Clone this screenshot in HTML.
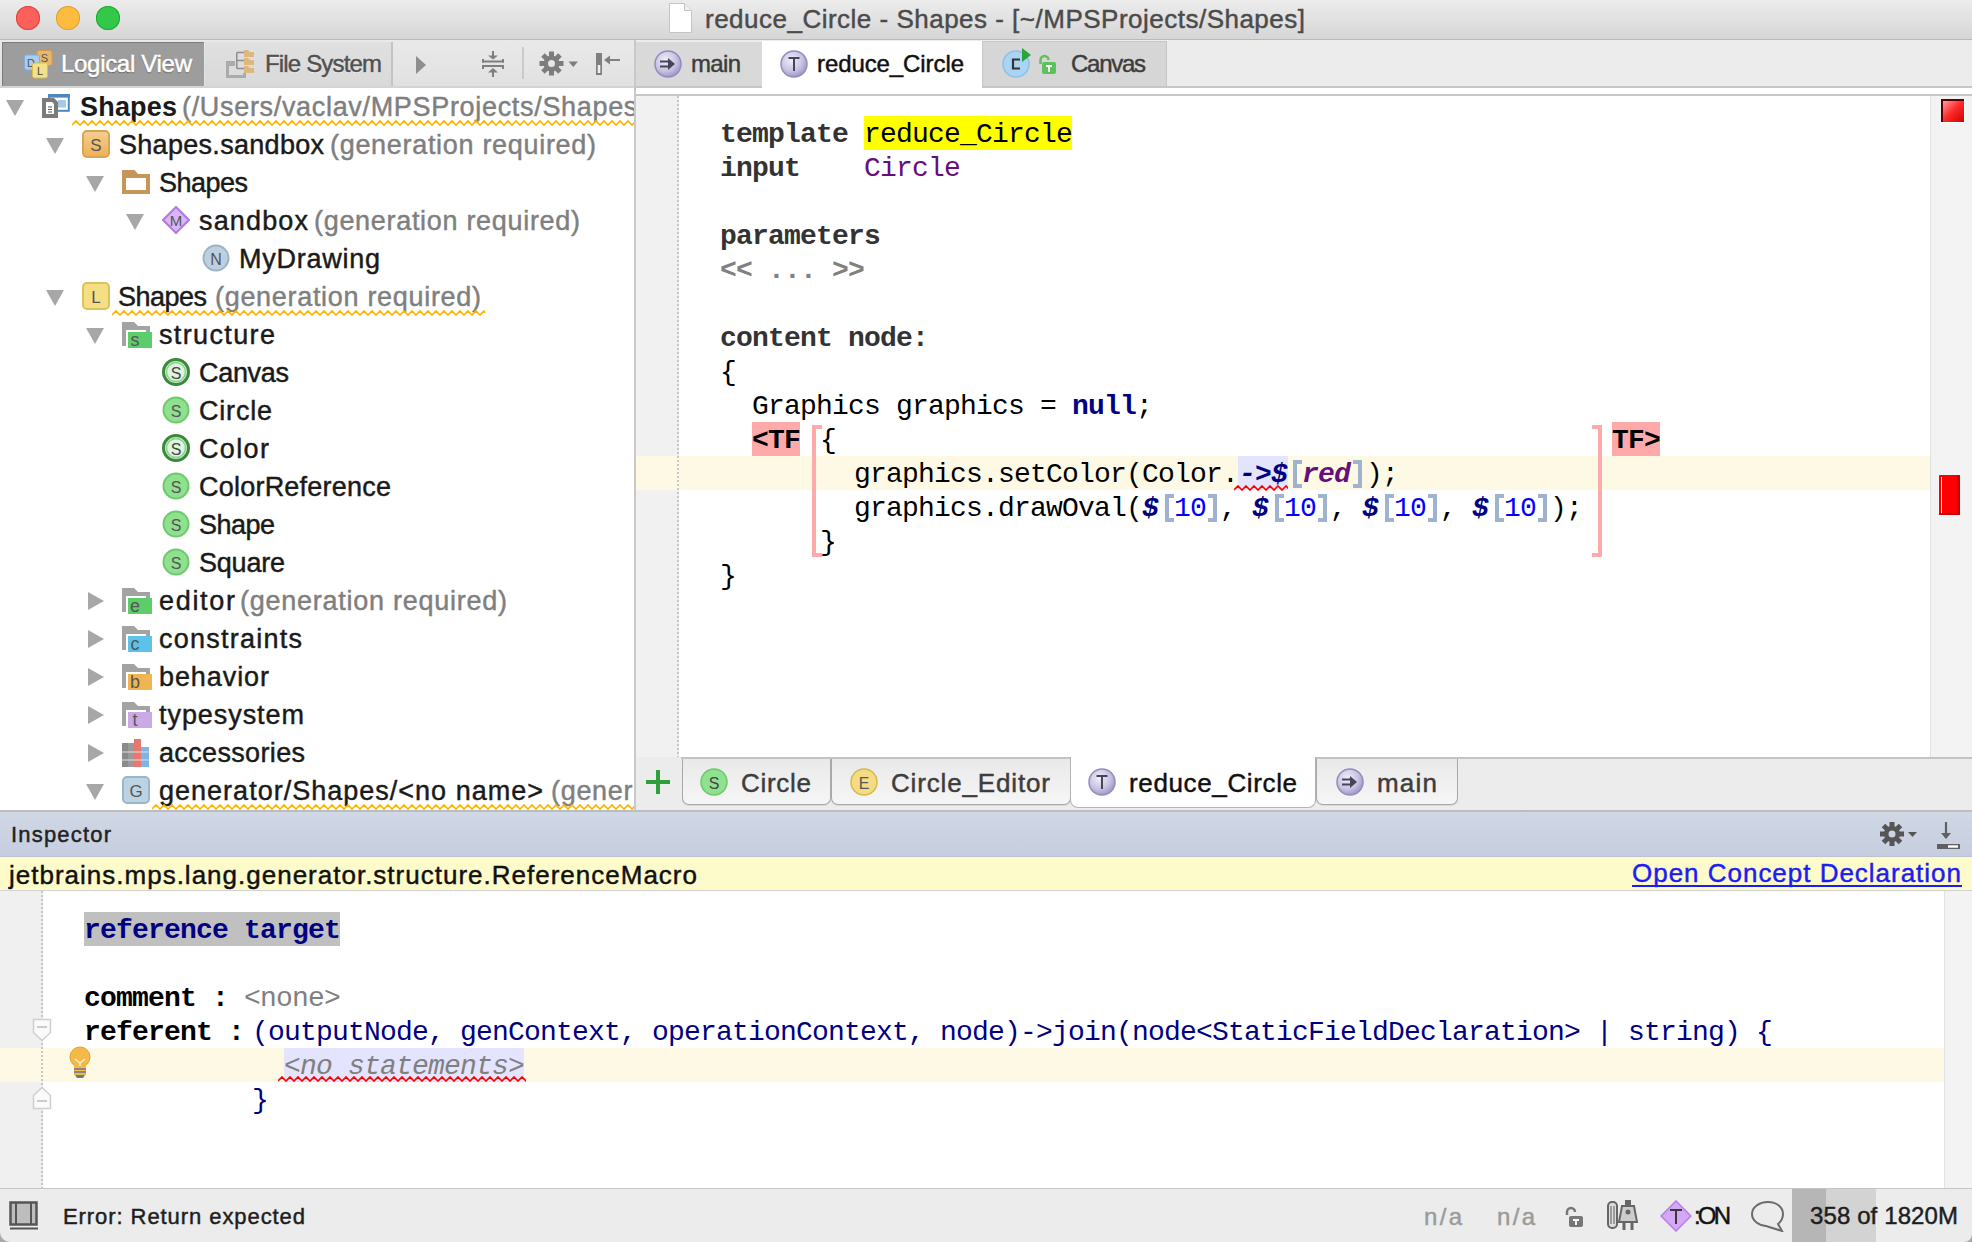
<!DOCTYPE html>
<html><head><meta charset="utf-8"><title>MPS</title>
<style>
html,body{margin:0;padding:0;}
body{width:1972px;height:1242px;overflow:hidden;position:relative;background:#ececec;font-family:"Liberation Sans",sans-serif;}
.t{position:absolute;white-space:pre;line-height:60px;}
svg{display:block;}
</style></head><body>
<div style="position:absolute;left:0px;top:0px;width:1972px;height:39px;background:linear-gradient(#ececec,#d6d6d6);"></div>
<div style="position:absolute;left:0px;top:39px;width:1972px;height:1px;background:#b9b9b9;"></div>
<div style="position:absolute;left:16px;top:6px;width:24px;height:24px;border-radius:50%;background:#fc605b;box-shadow:inset 0 0 0 1px #e0443e;"></div>
<div style="position:absolute;left:56px;top:6px;width:24px;height:24px;border-radius:50%;background:#fdbc40;box-shadow:inset 0 0 0 1px #dea236;"></div>
<div style="position:absolute;left:96px;top:6px;width:24px;height:24px;border-radius:50%;background:#34c84a;box-shadow:inset 0 0 0 1px #1aab29;"></div>
<svg style="position:absolute;left:668px;top:2px;" width="26" height="32" viewBox="0 0 26 32"><path d="M1.5 1.5h15l7 7v22h-22z" fill="#fff" stroke="#c4c4c4"/><path d="M16.5 1.5v7h7" fill="#eee" stroke="#c4c4c4"/></svg>
<div class="t" style="left:705px;top:-11px;font-family:'Liberation Sans',sans-serif;font-size:26px;color:#4b4b4b;letter-spacing:0.493px;-webkit-text-stroke:0.45px #4b4b4b;">reduce_Circle - Shapes - [~/MPSProjects/Shapes]</div>
<div style="position:absolute;left:0px;top:40px;width:634px;height:47px;background:linear-gradient(#e9e9e9,#e1e1e1);"></div>
<div style="position:absolute;left:2px;top:42px;width:202px;height:44px;background:#9d9d9d;box-shadow:inset 1px 1px 0 #7b7b7b;"></div>
<div style="position:absolute;left:205px;top:42px;width:186px;height:44px;background:linear-gradient(#e0e0e0,#d9d9d9);"></div>
<div style="position:absolute;left:391px;top:42px;width:2px;height:44px;background:#c3c3c3;"></div>
<div style="position:absolute;left:0px;top:86px;width:634px;height:2px;background:#d4d4d4;"></div>
<svg style="position:absolute;left:24px;top:50px;" width="30" height="30" viewBox="0 0 30 30"><rect x="13" y="0.5" width="15" height="15" rx="2" fill="#e8b86a" stroke="#d39c4c"/><text x="20.5" y="12" font-size="11" font-family="Liberation Sans" text-anchor="middle" fill="#555">S</text><rect x="0.5" y="5" width="15" height="15" rx="2" fill="#a8cdf0" stroke="#7fb0e0"/><text x="7" y="17" font-size="11" font-family="Liberation Sans" text-anchor="middle" fill="#555">D</text><rect x="8.5" y="13" width="15" height="15" rx="2" fill="#f3e08a" stroke="#d9bf52"/><text x="16" y="25" font-size="11" font-family="Liberation Sans" text-anchor="middle" fill="#444">L</text></svg>
<div class="t" style="left:61px;top:34px;font-family:'Liberation Sans',sans-serif;font-size:24px;color:#fff;letter-spacing:-0.301px;text-shadow:0 1px 1px #444,0 0 1px #666;-webkit-text-stroke:0.6px #fff;">Logical View</div>
<svg style="position:absolute;left:224px;top:48px;" width="32" height="32" viewBox="0 0 32 32"><path d="M2 13H11V18H5V27H19V25H22V30H2Z" fill="#ababab"/><path d="M12.75 4.5V20.5M12.75 4.5H20M12.75 12.5H20M12.75 20.5H20" stroke="#8e8e8e" stroke-width="1.5" fill="none"/><path d="M20 2h4l2 2h4v5h-10zM20 10h4l2 2h4v5h-10zM20 18h4l2 2h4v5h-10z" fill="#ddb77e"/></svg>
<div class="t" style="left:265px;top:34px;font-family:'Liberation Sans',sans-serif;font-size:24px;color:#505050;letter-spacing:-0.836px;text-shadow:0 1px 0 #f4f4f4;-webkit-text-stroke:0.45px #505050;">File System</div>
<svg style="position:absolute;left:414px;top:55px;" width="14" height="20" viewBox="0 0 14 20"><path d="M2 1l10 9-10 9z" fill="#8e8e8e"/></svg>
<svg style="position:absolute;left:480px;top:48px;" width="26" height="32" viewBox="0 0 26 32"><g fill="#7f7f7f"><rect x="2" y="12.5" width="22" height="2"/><rect x="2" y="17" width="22" height="2"/><rect x="2" y="11" width="2" height="3.5"/><rect x="22" y="11" width="2" height="3.5"/><rect x="2" y="17" width="2" height="4"/><rect x="22" y="17" width="2" height="4"/><rect x="12" y="3" width="2" height="6"/><path d="M8 7.5H18L13 11.5Z"/><path d="M8 24.5H18L13 20Z"/><rect x="12" y="24" width="2" height="5"/></g></svg>
<div style="position:absolute;left:522px;top:47px;width:2px;height:32px;background:#cacaca;"></div>
<svg style="position:absolute;left:539px;top:51px;" width="42" height="26" viewBox="0 0 42 26"><g transform="translate(12.5,12.5)" fill="#7d7d7d"><circle r="8"/><g id="tth"><rect x="-2.5" y="-12" width="5" height="24"/></g><rect x="-2.5" y="-12" width="5" height="24" transform="rotate(45)"/><rect x="-2.5" y="-12" width="5" height="24" transform="rotate(90)"/><rect x="-2.5" y="-12" width="5" height="24" transform="rotate(135)"/></g><circle cx="12.5" cy="12.5" r="3.5" fill="#e6e6e6"/><path d="M29.5 10.5h9.5l-4.75 5.5z" fill="#7d7d7d"/></svg>
<svg style="position:absolute;left:594px;top:52px;" width="28" height="24" viewBox="0 0 28 24"><g fill="#7f7f7f"><rect x="2" y="1" width="6" height="22"/><path d="M10 8L16 3.5V12.5Z"/><rect x="15" y="7" width="11" height="2"/></g><rect x="3.7" y="13" width="2.6" height="8" fill="#f0f0f0"/></svg>
<div style="position:absolute;left:634px;top:40px;width:2px;height:770px;background:#c9c9c9;"></div>
<div style="position:absolute;left:636px;top:40px;width:1336px;height:47px;background:#ececec;"></div>
<div style="position:absolute;left:636px;top:42px;width:126px;height:45px;background:#d9d9d9;"></div>
<div style="position:absolute;left:982px;top:41px;width:185px;height:46px;background:#d6d6d6;box-shadow:inset 0 0 0 1px #c6c6c6;"></div>
<div style="position:absolute;left:636px;top:86px;width:1336px;height:2px;background:#c6c6c6;"></div>
<div style="position:absolute;left:636px;top:88px;width:1336px;height:6px;background:#fff;"></div>
<div style="position:absolute;left:762px;top:41px;width:220px;height:53px;background:#fff;"></div>
<div style="position:absolute;left:636px;top:94px;width:1336px;height:2px;background:#c6c6c6;"></div>
<div style="position:absolute;left:0px;top:88px;width:634px;height:722px;background:#fff;"></div>
<div style="position:absolute;left:636px;top:96px;width:42px;height:661px;background:#f1f1f1;"></div>
<div style="position:absolute;left:679px;top:96px;width:1251px;height:661px;background:#fff;"></div>
<div style="position:absolute;left:1930px;top:96px;width:1px;height:661px;background:#e2e2e2;"></div>
<div style="position:absolute;left:1931px;top:96px;width:41px;height:661px;background:#f3f3f3;"></div>
<div style="position:absolute;left:636px;top:456px;width:1294px;height:34px;background:#fef9e5;"></div>
<div style="position:absolute;left:677px;top:96px;width:2px;height:661px;background:repeating-linear-gradient(#c6c6c6 0 2px,transparent 2px 4px);"></div>
<svg style="position:absolute;left:1941px;top:99px;" width="24" height="24" viewBox="0 0 24 24"><defs><linearGradient id="rg" x1="0" y1="0" x2="1" y2="1"><stop offset="0" stop-color="#ffaaaa"/><stop offset="0.5" stop-color="#ff2a2a"/><stop offset="1" stop-color="#cc0000"/></linearGradient></defs><rect x="0" y="0" width="24" height="24" fill="#fff"/><rect x="1" y="1" width="22" height="22" fill="url(#rg)"/><path d="M1 23V1h22" fill="none" stroke="#5a0000" stroke-width="2"/></svg>
<div style="position:absolute;left:1939px;top:475px;width:21px;height:40px;background:#ff0000;box-shadow:inset -3px -2px 0 #c80000;border-radius:1px;"></div>
<div style="position:absolute;left:1941px;top:477px;width:1px;height:36px;background:#fff;"></div>
<div style="position:absolute;left:636px;top:757px;width:1336px;height:53px;background:#ececec;"></div>
<div style="position:absolute;left:0px;top:810px;width:1972px;height:2px;background:#bdbdbd;"></div>
<div style="position:absolute;left:0px;top:812px;width:1972px;height:45px;background:linear-gradient(#d0d8e6,#c5cddf);"></div>
<div style="position:absolute;left:0px;top:856px;width:1972px;height:1px;background:#bcc3d3;"></div>
<div style="position:absolute;left:0px;top:857px;width:1972px;height:33px;background:#fefbcb;"></div>
<div style="position:absolute;left:0px;top:890px;width:1972px;height:1px;background:#d3d3d3;"></div>
<div style="position:absolute;left:0px;top:891px;width:42px;height:297px;background:#f0f0f0;"></div>
<div style="position:absolute;left:43px;top:891px;width:1901px;height:297px;background:#fff;"></div>
<div style="position:absolute;left:1944px;top:891px;width:1px;height:297px;background:#e2e2e2;"></div>
<div style="position:absolute;left:1945px;top:891px;width:27px;height:297px;background:#f3f3f3;"></div>
<div style="position:absolute;left:0px;top:1048px;width:1944px;height:34px;background:#fef9e5;"></div>
<div style="position:absolute;left:41px;top:891px;width:2px;height:297px;background:repeating-linear-gradient(#c6c6c6 0 2px,transparent 2px 4px);"></div>
<div style="position:absolute;left:0px;top:1188px;width:1972px;height:1px;background:#c4c4c4;"></div>
<div style="position:absolute;left:0px;top:1189px;width:1972px;height:53px;background:#ececec;"></div>
<div style="position:absolute;left:1792px;top:1189px;width:34px;height:53px;background:#b6b6b6;"></div>
<div style="position:absolute;left:1826px;top:1189px;width:50px;height:53px;background:#d3d3d3;"></div>
<div style="position:absolute;left:0;top:0;width:634px;height:810px;overflow:hidden">
<svg style="position:absolute;left:6px;top:100px;" width="18" height="16" viewBox="0 0 18 16"><path d="M0 0h18l-9 16z" fill="#a7a7a7"/></svg>
<svg style="position:absolute;left:42px;top:93px;" width="30" height="26" viewBox="0 0 30 26"><rect x="7.2" y="2.1" width="19.6" height="15.7" fill="#fff" stroke="#4d87bf" stroke-width="2"/><rect x="6.2" y="1.1" width="21.6" height="3.5" fill="#4d87bf"/><rect x="16" y="7" width="8" height="7.6" fill="#a9c8e4"/><path d="M0 5H12L16 9V25H0Z" fill="#7a7a7a"/><path d="M4 9H10L12 11V21H4Z" fill="#fff"/><path d="M6 14H10M6 16.5H10M6 19H10" stroke="#555" stroke-width="1"/></svg>
<div class="t" style="left:80px;top:76.5px;font-family:'Liberation Sans',sans-serif;font-size:27px;color:#1a1a1a;font-weight:700;letter-spacing:0.191px;">Shapes</div>
<div class="t" style="left:182px;top:76.5px;font-family:'Liberation Sans',sans-serif;font-size:27px;color:#7f7f7f;letter-spacing:0.678px;-webkit-text-stroke:0.45px #7f7f7f;">(/Users/vaclav/MPSProjects/Shapes)</div>
<svg style="position:absolute;left:72px;top:120px;" width="562" height="6" viewBox="0 0 562 6"><polyline points="0,5 4,1 8,5 12,1 16,5 20,1 24,5 28,1 32,5 36,1 40,5 44,1 48,5 52,1 56,5 60,1 64,5 68,1 72,5 76,1 80,5 84,1 88,5 92,1 96,5 100,1 104,5 108,1 112,5 116,1 120,5 124,1 128,5 132,1 136,5 140,1 144,5 148,1 152,5 156,1 160,5 164,1 168,5 172,1 176,5 180,1 184,5 188,1 192,5 196,1 200,5 204,1 208,5 212,1 216,5 220,1 224,5 228,1 232,5 236,1 240,5 244,1 248,5 252,1 256,5 260,1 264,5 268,1 272,5 276,1 280,5 284,1 288,5 292,1 296,5 300,1 304,5 308,1 312,5 316,1 320,5 324,1 328,5 332,1 336,5 340,1 344,5 348,1 352,5 356,1 360,5 364,1 368,5 372,1 376,5 380,1 384,5 388,1 392,5 396,1 400,5 404,1 408,5 412,1 416,5 420,1 424,5 428,1 432,5 436,1 440,5 444,1 448,5 452,1 456,5 460,1 464,5 468,1 472,5 476,1 480,5 484,1 488,5 492,1 496,5 500,1 504,5 508,1 512,5 516,1 520,5 524,1 528,5 532,1 536,5 540,1 544,5 548,1 552,5 556,1 560,5 564,1 568,5" fill="none" stroke="#fdb300" stroke-width="1.7"/></svg>
<svg style="position:absolute;left:46px;top:138px;" width="18" height="16" viewBox="0 0 18 16"><path d="M0 0h18l-9 16z" fill="#a7a7a7"/></svg>
<svg style="position:absolute;left:82px;top:130px;" width="28" height="28" viewBox="0 0 28 28"><defs><linearGradient id="og" x1="0" y1="0" x2="0" y2="1"><stop offset="0" stop-color="#f2cf94"/><stop offset="1" stop-color="#f0b053"/></linearGradient></defs><rect x="1" y="1" width="26" height="26" rx="4" fill="url(#og)" stroke="#dca452" stroke-width="2"/><text x="14" y="21" font-size="17" font-family="Liberation Sans" text-anchor="middle" fill="#555">S</text></svg>
<div class="t" style="left:119px;top:114.5px;font-family:'Liberation Sans',sans-serif;font-size:27px;color:#1a1a1a;letter-spacing:0.296px;-webkit-text-stroke:0.45px #1a1a1a;">Shapes.sandbox</div>
<div class="t" style="left:330px;top:114.5px;font-family:'Liberation Sans',sans-serif;font-size:27px;color:#7f7f7f;letter-spacing:0.692px;-webkit-text-stroke:0.45px #7f7f7f;">(generation required)</div>
<svg style="position:absolute;left:86px;top:176px;" width="18" height="16" viewBox="0 0 18 16"><path d="M0 0h18l-9 16z" fill="#a7a7a7"/></svg>
<svg style="position:absolute;left:122px;top:170px;" width="30" height="26" viewBox="0 0 30 26"><path d="M0 0h12.5l3.5 4h12v20h-28z" fill="#c4965a"/><rect x="4" y="8" width="20" height="12" fill="#fff"/></svg>
<div class="t" style="left:159px;top:152.5px;font-family:'Liberation Sans',sans-serif;font-size:27px;color:#1a1a1a;letter-spacing:-0.516px;-webkit-text-stroke:0.45px #1a1a1a;">Shapes</div>
<svg style="position:absolute;left:126px;top:214px;" width="18" height="16" viewBox="0 0 18 16"><path d="M0 0h18l-9 16z" fill="#a7a7a7"/></svg>
<svg style="position:absolute;left:162px;top:206px;" width="28" height="28" viewBox="0 0 28 28"><path d="M14 1l13 13-13 13-13-13z" fill="#d9b6f7" stroke="#b07ae0" stroke-width="2"/><text x="14" y="20" font-size="15" font-family="Liberation Sans" text-anchor="middle" fill="#555">M</text></svg>
<div class="t" style="left:199px;top:190.5px;font-family:'Liberation Sans',sans-serif;font-size:27px;color:#1a1a1a;letter-spacing:1.151px;-webkit-text-stroke:0.45px #1a1a1a;">sandbox</div>
<div class="t" style="left:314px;top:190.5px;font-family:'Liberation Sans',sans-serif;font-size:27px;color:#7f7f7f;letter-spacing:0.692px;-webkit-text-stroke:0.45px #7f7f7f;">(generation required)</div>
<svg style="position:absolute;left:202px;top:244px;" width="28" height="28" viewBox="0 0 28 28"><circle cx="14" cy="14" r="12.5" fill="#bdd0e0" stroke="#9bb3c8" stroke-width="2"/><text x="14" y="20.5" font-size="16" font-family="Liberation Sans" text-anchor="middle" fill="#555">N</text></svg>
<div class="t" style="left:239px;top:228.5px;font-family:'Liberation Sans',sans-serif;font-size:27px;color:#1a1a1a;letter-spacing:0.746px;-webkit-text-stroke:0.45px #1a1a1a;">MyDrawing</div>
<svg style="position:absolute;left:46px;top:290px;" width="18" height="16" viewBox="0 0 18 16"><path d="M0 0h18l-9 16z" fill="#a7a7a7"/></svg>
<svg style="position:absolute;left:82px;top:282px;" width="28" height="28" viewBox="0 0 28 28"><defs><linearGradient id="og" x1="0" y1="0" x2="0" y2="1"><stop offset="0" stop-color="#f2cf94"/><stop offset="1" stop-color="#f0b053"/></linearGradient></defs><rect x="1" y="1" width="26" height="26" rx="4" fill="#f5df85" stroke="#dcc25a" stroke-width="2"/><text x="14" y="21" font-size="17" font-family="Liberation Sans" text-anchor="middle" fill="#555">L</text></svg>
<div class="t" style="left:118px;top:266.5px;font-family:'Liberation Sans',sans-serif;font-size:27px;color:#1a1a1a;letter-spacing:-0.516px;-webkit-text-stroke:0.45px #1a1a1a;">Shapes</div>
<div class="t" style="left:215px;top:266.5px;font-family:'Liberation Sans',sans-serif;font-size:27px;color:#7f7f7f;letter-spacing:0.692px;-webkit-text-stroke:0.45px #7f7f7f;">(generation required)</div>
<svg style="position:absolute;left:112px;top:310px;" width="373" height="6" viewBox="0 0 373 6"><polyline points="0,5 4,1 8,5 12,1 16,5 20,1 24,5 28,1 32,5 36,1 40,5 44,1 48,5 52,1 56,5 60,1 64,5 68,1 72,5 76,1 80,5 84,1 88,5 92,1 96,5 100,1 104,5 108,1 112,5 116,1 120,5 124,1 128,5 132,1 136,5 140,1 144,5 148,1 152,5 156,1 160,5 164,1 168,5 172,1 176,5 180,1 184,5 188,1 192,5 196,1 200,5 204,1 208,5 212,1 216,5 220,1 224,5 228,1 232,5 236,1 240,5 244,1 248,5 252,1 256,5 260,1 264,5 268,1 272,5 276,1 280,5 284,1 288,5 292,1 296,5 300,1 304,5 308,1 312,5 316,1 320,5 324,1 328,5 332,1 336,5 340,1 344,5 348,1 352,5 356,1 360,5 364,1 368,5 372,1 376,5 380,1" fill="none" stroke="#fdb300" stroke-width="1.7"/></svg>
<svg style="position:absolute;left:86px;top:328px;" width="18" height="16" viewBox="0 0 18 16"><path d="M0 0h18l-9 16z" fill="#a7a7a7"/></svg>
<svg style="position:absolute;left:122px;top:322px;" width="32" height="28" viewBox="0 0 32 28"><path d="M0 0h12l4 4h12v6h-4v-2h-20v16h-4z" fill="#a3a3a3"/><rect x="4" y="8" width="20" height="16" fill="#fff"/><rect x="6" y="10" width="24" height="16" fill="#5dcc6a"/><text x="13" y="24" font-size="18" font-family="Liberation Sans" text-anchor="middle" fill="#555">s</text></svg>
<div class="t" style="left:159px;top:304.5px;font-family:'Liberation Sans',sans-serif;font-size:27px;color:#1a1a1a;letter-spacing:1.369px;-webkit-text-stroke:0.45px #1a1a1a;">structure</div>
<svg style="position:absolute;left:162px;top:358px;" width="28" height="28" viewBox="0 0 28 28"><circle cx="14" cy="14" r="12.5" fill="#cdeecd" stroke="#3a8a3e" stroke-width="3"/><circle cx="14" cy="14" r="9.5" fill="#dcf5dc" stroke="#8fd08f" stroke-width="1.5"/><text x="14" y="20.5" font-size="16" font-family="Liberation Sans" text-anchor="middle" fill="#444">S</text></svg>
<div class="t" style="left:199px;top:342.5px;font-family:'Liberation Sans',sans-serif;font-size:27px;color:#1a1a1a;letter-spacing:-0.309px;-webkit-text-stroke:0.45px #1a1a1a;">Canvas</div>
<svg style="position:absolute;left:162px;top:396px;" width="28" height="28" viewBox="0 0 28 28"><circle cx="14" cy="14" r="12.5" fill="#8fe08f" stroke="#6cc96c" stroke-width="2"/><text x="14" y="20.5" font-size="16" font-family="Liberation Sans" text-anchor="middle" fill="#555">S</text></svg>
<div class="t" style="left:199px;top:380.5px;font-family:'Liberation Sans',sans-serif;font-size:27px;color:#1a1a1a;letter-spacing:0.797px;-webkit-text-stroke:0.45px #1a1a1a;">Circle</div>
<svg style="position:absolute;left:162px;top:434px;" width="28" height="28" viewBox="0 0 28 28"><circle cx="14" cy="14" r="12.5" fill="#cdeecd" stroke="#3a8a3e" stroke-width="3"/><circle cx="14" cy="14" r="9.5" fill="#dcf5dc" stroke="#8fd08f" stroke-width="1.5"/><text x="14" y="20.5" font-size="16" font-family="Liberation Sans" text-anchor="middle" fill="#444">S</text></svg>
<div class="t" style="left:199px;top:418.5px;font-family:'Liberation Sans',sans-serif;font-size:27px;color:#1a1a1a;letter-spacing:1.367px;-webkit-text-stroke:0.45px #1a1a1a;">Color</div>
<svg style="position:absolute;left:162px;top:472px;" width="28" height="28" viewBox="0 0 28 28"><circle cx="14" cy="14" r="12.5" fill="#8fe08f" stroke="#6cc96c" stroke-width="2"/><text x="14" y="20.5" font-size="16" font-family="Liberation Sans" text-anchor="middle" fill="#555">S</text></svg>
<div class="t" style="left:199px;top:456.5px;font-family:'Liberation Sans',sans-serif;font-size:27px;color:#1a1a1a;letter-spacing:0.224px;-webkit-text-stroke:0.45px #1a1a1a;">ColorReference</div>
<svg style="position:absolute;left:162px;top:510px;" width="28" height="28" viewBox="0 0 28 28"><circle cx="14" cy="14" r="12.5" fill="#8fe08f" stroke="#6cc96c" stroke-width="2"/><text x="14" y="20.5" font-size="16" font-family="Liberation Sans" text-anchor="middle" fill="#555">S</text></svg>
<div class="t" style="left:199px;top:494.5px;font-family:'Liberation Sans',sans-serif;font-size:27px;color:#1a1a1a;letter-spacing:-0.520px;-webkit-text-stroke:0.45px #1a1a1a;">Shape</div>
<svg style="position:absolute;left:162px;top:548px;" width="28" height="28" viewBox="0 0 28 28"><circle cx="14" cy="14" r="12.5" fill="#8fe08f" stroke="#6cc96c" stroke-width="2"/><text x="14" y="20.5" font-size="16" font-family="Liberation Sans" text-anchor="middle" fill="#555">S</text></svg>
<div class="t" style="left:199px;top:532.5px;font-family:'Liberation Sans',sans-serif;font-size:27px;color:#1a1a1a;letter-spacing:-0.216px;-webkit-text-stroke:0.45px #1a1a1a;">Square</div>
<svg style="position:absolute;left:88px;top:592px;" width="16" height="18" viewBox="0 0 16 18"><path d="M0 0l16 9-16 9z" fill="#a7a7a7"/></svg>
<svg style="position:absolute;left:122px;top:588px;" width="32" height="28" viewBox="0 0 32 28"><path d="M0 0h12l4 4h12v6h-4v-2h-20v16h-4z" fill="#a3a3a3"/><rect x="4" y="8" width="20" height="16" fill="#fff"/><rect x="6" y="10" width="24" height="16" fill="#5dcc6a"/><text x="13" y="24" font-size="18" font-family="Liberation Sans" text-anchor="middle" fill="#555">e</text></svg>
<div class="t" style="left:159px;top:570.5px;font-family:'Liberation Sans',sans-serif;font-size:27px;color:#1a1a1a;letter-spacing:1.691px;-webkit-text-stroke:0.45px #1a1a1a;">editor</div>
<svg style="position:absolute;left:88px;top:630px;" width="16" height="18" viewBox="0 0 16 18"><path d="M0 0l16 9-16 9z" fill="#a7a7a7"/></svg>
<svg style="position:absolute;left:122px;top:626px;" width="32" height="28" viewBox="0 0 32 28"><path d="M0 0h12l4 4h12v6h-4v-2h-20v16h-4z" fill="#a3a3a3"/><rect x="4" y="8" width="20" height="16" fill="#fff"/><rect x="6" y="10" width="24" height="16" fill="#5cc2e8"/><text x="13" y="24" font-size="18" font-family="Liberation Sans" text-anchor="middle" fill="#555">c</text></svg>
<div class="t" style="left:159px;top:608.5px;font-family:'Liberation Sans',sans-serif;font-size:27px;color:#1a1a1a;letter-spacing:1.244px;-webkit-text-stroke:0.45px #1a1a1a;">constraints</div>
<svg style="position:absolute;left:88px;top:668px;" width="16" height="18" viewBox="0 0 16 18"><path d="M0 0l16 9-16 9z" fill="#a7a7a7"/></svg>
<svg style="position:absolute;left:122px;top:664px;" width="32" height="28" viewBox="0 0 32 28"><path d="M0 0h12l4 4h12v6h-4v-2h-20v16h-4z" fill="#a3a3a3"/><rect x="4" y="8" width="20" height="16" fill="#fff"/><rect x="6" y="10" width="24" height="16" fill="#f0b452"/><text x="13" y="24" font-size="18" font-family="Liberation Sans" text-anchor="middle" fill="#555">b</text></svg>
<div class="t" style="left:159px;top:646.5px;font-family:'Liberation Sans',sans-serif;font-size:27px;color:#1a1a1a;letter-spacing:0.917px;-webkit-text-stroke:0.45px #1a1a1a;">behavior</div>
<svg style="position:absolute;left:88px;top:706px;" width="16" height="18" viewBox="0 0 16 18"><path d="M0 0l16 9-16 9z" fill="#a7a7a7"/></svg>
<svg style="position:absolute;left:122px;top:702px;" width="32" height="28" viewBox="0 0 32 28"><path d="M0 0h12l4 4h12v6h-4v-2h-20v16h-4z" fill="#a3a3a3"/><rect x="4" y="8" width="20" height="16" fill="#fff"/><rect x="6" y="10" width="24" height="16" fill="#cba8e6"/><text x="13" y="24" font-size="18" font-family="Liberation Sans" text-anchor="middle" fill="#555">t</text></svg>
<div class="t" style="left:159px;top:684.5px;font-family:'Liberation Sans',sans-serif;font-size:27px;color:#1a1a1a;letter-spacing:0.939px;-webkit-text-stroke:0.45px #1a1a1a;">typesystem</div>
<div class="t" style="left:240px;top:570.5px;font-family:'Liberation Sans',sans-serif;font-size:27px;color:#7f7f7f;letter-spacing:0.742px;-webkit-text-stroke:0.45px #7f7f7f;">(generation required)</div>
<svg style="position:absolute;left:88px;top:744px;" width="16" height="18" viewBox="0 0 16 18"><path d="M0 0l16 9-16 9z" fill="#a7a7a7"/></svg>
<svg style="position:absolute;left:122px;top:739px;" width="30" height="28" viewBox="0 0 30 28"><rect x="0" y="4" width="6" height="24" fill="#8a8a8a"/><rect x="6" y="4" width="6" height="24" fill="#9a9a9a"/><rect x="12" y="0" width="7" height="28" fill="#e8776f"/><rect x="19" y="8" width="8" height="20" fill="#7fb2e6"/><path d="M0 13h27M0 21h27" stroke="#ddd" stroke-width="1.5" opacity="0.7"/></svg>
<div class="t" style="left:159px;top:722.5px;font-family:'Liberation Sans',sans-serif;font-size:27px;color:#1a1a1a;letter-spacing:0.344px;-webkit-text-stroke:0.45px #1a1a1a;">accessories</div>
<svg style="position:absolute;left:86px;top:784px;" width="18" height="16" viewBox="0 0 18 16"><path d="M0 0h18l-9 16z" fill="#a7a7a7"/></svg>
<svg style="position:absolute;left:122px;top:776px;" width="28" height="28" viewBox="0 0 28 28"><defs><linearGradient id="og" x1="0" y1="0" x2="0" y2="1"><stop offset="0" stop-color="#f2cf94"/><stop offset="1" stop-color="#f0b053"/></linearGradient></defs><rect x="1" y="1" width="26" height="26" rx="4" fill="#bcd3e3" stroke="#9ab6ca" stroke-width="2"/><text x="14" y="21" font-size="17" font-family="Liberation Sans" text-anchor="middle" fill="#555">G</text></svg>
<div class="t" style="left:159px;top:760.5px;font-family:'Liberation Sans',sans-serif;font-size:27px;color:#1a1a1a;letter-spacing:1.009px;-webkit-text-stroke:0.45px #1a1a1a;">generator/Shapes/&lt;no name&gt;</div>
<div class="t" style="left:551px;top:760.5px;font-family:'Liberation Sans',sans-serif;font-size:27px;color:#7f7f7f;letter-spacing:0.692px;-webkit-text-stroke:0.45px #7f7f7f;">(generation required)</div>
<svg style="position:absolute;left:152px;top:804px;" width="482" height="6" viewBox="0 0 482 6"><polyline points="0,5 4,1 8,5 12,1 16,5 20,1 24,5 28,1 32,5 36,1 40,5 44,1 48,5 52,1 56,5 60,1 64,5 68,1 72,5 76,1 80,5 84,1 88,5 92,1 96,5 100,1 104,5 108,1 112,5 116,1 120,5 124,1 128,5 132,1 136,5 140,1 144,5 148,1 152,5 156,1 160,5 164,1 168,5 172,1 176,5 180,1 184,5 188,1 192,5 196,1 200,5 204,1 208,5 212,1 216,5 220,1 224,5 228,1 232,5 236,1 240,5 244,1 248,5 252,1 256,5 260,1 264,5 268,1 272,5 276,1 280,5 284,1 288,5 292,1 296,5 300,1 304,5 308,1 312,5 316,1 320,5 324,1 328,5 332,1 336,5 340,1 344,5 348,1 352,5 356,1 360,5 364,1 368,5 372,1 376,5 380,1 384,5 388,1 392,5 396,1 400,5 404,1 408,5 412,1 416,5 420,1 424,5 428,1 432,5 436,1 440,5 444,1 448,5 452,1 456,5 460,1 464,5 468,1 472,5 476,1 480,5 484,1 488,5" fill="none" stroke="#fdb300" stroke-width="1.7"/></svg>
</div>
<div style="position:absolute;left:634px;top:88px;width:2px;height:722px;background:#c9c9c9;"></div>
<div style="position:absolute;left:864px;top:116px;width:208px;height:34px;background:#ffff00;"></div>
<div class="t" style="left:720px;top:105px;font-family:'Liberation Mono',monospace;font-size:28px;color:#333333;font-weight:700;letter-spacing:-0.803px;">template</div>
<div class="t" style="left:864px;top:105px;font-family:'Liberation Mono',monospace;font-size:28px;color:#000;letter-spacing:-0.803px;">reduce_Circle</div>
<div class="t" style="left:720px;top:139px;font-family:'Liberation Mono',monospace;font-size:28px;color:#333333;font-weight:700;letter-spacing:-0.803px;">input</div>
<div class="t" style="left:864px;top:139px;font-family:'Liberation Mono',monospace;font-size:28px;color:#660e7a;letter-spacing:-0.803px;">Circle</div>
<div class="t" style="left:720px;top:207px;font-family:'Liberation Mono',monospace;font-size:28px;color:#333333;font-weight:700;letter-spacing:-0.803px;">parameters</div>
<div class="t" style="left:720px;top:241px;font-family:'Liberation Mono',monospace;font-size:28px;color:#808080;font-weight:700;letter-spacing:-0.803px;">&lt;&lt; ... &gt;&gt;</div>
<div class="t" style="left:720px;top:309px;font-family:'Liberation Mono',monospace;font-size:28px;color:#333333;font-weight:700;letter-spacing:-0.803px;">content node:</div>
<div class="t" style="left:720px;top:343px;font-family:'Liberation Mono',monospace;font-size:28px;color:#000;letter-spacing:-0.803px;">{</div>
<div class="t" style="left:752px;top:377px;font-family:'Liberation Mono',monospace;font-size:28px;color:#000;letter-spacing:-0.803px;">Graphics graphics = </div>
<div class="t" style="left:1072px;top:377px;font-family:'Liberation Mono',monospace;font-size:28px;color:#000080;font-weight:700;letter-spacing:-0.803px;">null</div>
<div class="t" style="left:1136px;top:377px;font-family:'Liberation Mono',monospace;font-size:28px;color:#000;letter-spacing:-0.803px;">;</div>
<div style="position:absolute;left:752px;top:422px;width:48px;height:34px;background:#ffaaaa;"></div>
<div class="t" style="left:752px;top:411px;font-family:'Liberation Mono',monospace;font-size:28px;color:#000;font-weight:700;letter-spacing:-0.803px;">&lt;TF</div>
<div class="t" style="left:820px;top:411px;font-family:'Liberation Mono',monospace;font-size:28px;color:#000;letter-spacing:-0.803px;">{</div>
<div style="position:absolute;left:1612px;top:422px;width:48px;height:34px;background:#ffaaaa;"></div>
<div class="t" style="left:1612px;top:411px;font-family:'Liberation Mono',monospace;font-size:28px;color:#000;font-weight:700;letter-spacing:-0.803px;">TF&gt;</div>
<svg style="position:absolute;left:811px;top:425px;" width="12" height="132" viewBox="0 0 12 132"><path d="M11 2H3v128h8" fill="none" stroke="#ffaaaa" stroke-width="4"/></svg>
<svg style="position:absolute;left:1591px;top:425px;" width="12" height="132" viewBox="0 0 12 132"><path d="M1 2h8v128H1" fill="none" stroke="#ffaaaa" stroke-width="4"/></svg>
<div class="t" style="left:820px;top:513px;font-family:'Liberation Mono',monospace;font-size:28px;color:#000;letter-spacing:-0.803px;">}</div>
<div class="t" style="left:720px;top:547px;font-family:'Liberation Mono',monospace;font-size:28px;color:#000;letter-spacing:-0.803px;">}</div>
<div class="t" style="left:854px;top:445px;font-family:'Liberation Mono',monospace;font-size:28px;color:#000;letter-spacing:-0.803px;">graphics.setColor(Color.</div>
<div style="position:absolute;left:1238px;top:456px;width:50px;height:34px;background:#e4e4ff;"></div>
<div class="t" style="left:1239px;top:445px;font-family:'Liberation Mono',monospace;font-size:28px;color:#000080;font-weight:700;font-style:italic;letter-spacing:-0.803px;">-&gt;$</div>
<svg style="position:absolute;left:1234px;top:485px;" width="54" height="6" viewBox="0 0 54 6"><polyline points="0,5 4,1 8,5 12,1 16,5 20,1 24,5 28,1 32,5 36,1 40,5 44,1 48,5 52,1 56,5 60,1" fill="none" stroke="#ff0000" stroke-width="1.7"/></svg>
<svg style="position:absolute;left:1292px;top:460px;" width="11" height="28" viewBox="0 0 11 28"><path d="M10 2H3v24h7" fill="none" stroke="#9fb3cf" stroke-width="4"/></svg>
<div class="t" style="left:1302px;top:445px;font-family:'Liberation Mono',monospace;font-size:28px;color:#660e7a;font-weight:700;font-style:italic;letter-spacing:-0.803px;">red</div>
<svg style="position:absolute;left:1353px;top:460px;" width="11" height="28" viewBox="0 0 11 28"><path d="M0 2h7v24H0" fill="none" stroke="#9fb3cf" stroke-width="4"/></svg>
<div class="t" style="left:1366px;top:445px;font-family:'Liberation Mono',monospace;font-size:28px;color:#000;letter-spacing:-0.803px;">);</div>
<div class="t" style="left:854px;top:479px;font-family:'Liberation Mono',monospace;font-size:28px;color:#000;letter-spacing:-0.803px;">graphics.drawOval(</div>
<div class="t" style="left:1142px;top:479px;font-family:'Liberation Mono',monospace;font-size:28px;color:#000080;font-weight:700;font-style:italic;letter-spacing:-0.803px;">$</div>
<svg style="position:absolute;left:1164px;top:494px;" width="11" height="28" viewBox="0 0 11 28"><path d="M10 2H3v24h7" fill="none" stroke="#9fb3cf" stroke-width="4"/></svg>
<div class="t" style="left:1174px;top:479px;font-family:'Liberation Mono',monospace;font-size:28px;color:#0000ff;letter-spacing:-0.803px;">10</div>
<svg style="position:absolute;left:1208px;top:494px;" width="11" height="28" viewBox="0 0 11 28"><path d="M0 2h7v24H0" fill="none" stroke="#9fb3cf" stroke-width="4"/></svg>
<div class="t" style="left:1220px;top:479px;font-family:'Liberation Mono',monospace;font-size:28px;color:#000;letter-spacing:-0.803px;">,</div>
<div class="t" style="left:1252px;top:479px;font-family:'Liberation Mono',monospace;font-size:28px;color:#000080;font-weight:700;font-style:italic;letter-spacing:-0.803px;">$</div>
<svg style="position:absolute;left:1274px;top:494px;" width="11" height="28" viewBox="0 0 11 28"><path d="M10 2H3v24h7" fill="none" stroke="#9fb3cf" stroke-width="4"/></svg>
<div class="t" style="left:1284px;top:479px;font-family:'Liberation Mono',monospace;font-size:28px;color:#0000ff;letter-spacing:-0.803px;">10</div>
<svg style="position:absolute;left:1318px;top:494px;" width="11" height="28" viewBox="0 0 11 28"><path d="M0 2h7v24H0" fill="none" stroke="#9fb3cf" stroke-width="4"/></svg>
<div class="t" style="left:1330px;top:479px;font-family:'Liberation Mono',monospace;font-size:28px;color:#000;letter-spacing:-0.803px;">,</div>
<div class="t" style="left:1362px;top:479px;font-family:'Liberation Mono',monospace;font-size:28px;color:#000080;font-weight:700;font-style:italic;letter-spacing:-0.803px;">$</div>
<svg style="position:absolute;left:1384px;top:494px;" width="11" height="28" viewBox="0 0 11 28"><path d="M10 2H3v24h7" fill="none" stroke="#9fb3cf" stroke-width="4"/></svg>
<div class="t" style="left:1394px;top:479px;font-family:'Liberation Mono',monospace;font-size:28px;color:#0000ff;letter-spacing:-0.803px;">10</div>
<svg style="position:absolute;left:1428px;top:494px;" width="11" height="28" viewBox="0 0 11 28"><path d="M0 2h7v24H0" fill="none" stroke="#9fb3cf" stroke-width="4"/></svg>
<div class="t" style="left:1440px;top:479px;font-family:'Liberation Mono',monospace;font-size:28px;color:#000;letter-spacing:-0.803px;">,</div>
<div class="t" style="left:1472px;top:479px;font-family:'Liberation Mono',monospace;font-size:28px;color:#000080;font-weight:700;font-style:italic;letter-spacing:-0.803px;">$</div>
<svg style="position:absolute;left:1494px;top:494px;" width="11" height="28" viewBox="0 0 11 28"><path d="M10 2H3v24h7" fill="none" stroke="#9fb3cf" stroke-width="4"/></svg>
<div class="t" style="left:1504px;top:479px;font-family:'Liberation Mono',monospace;font-size:28px;color:#0000ff;letter-spacing:-0.803px;">10</div>
<svg style="position:absolute;left:1538px;top:494px;" width="11" height="28" viewBox="0 0 11 28"><path d="M0 2h7v24H0" fill="none" stroke="#9fb3cf" stroke-width="4"/></svg>
<div class="t" style="left:1550px;top:479px;font-family:'Liberation Mono',monospace;font-size:28px;color:#000;letter-spacing:-0.803px;">);</div>
<svg style="position:absolute;left:654px;top:50px;" width="28" height="28" viewBox="0 0 28 28"><defs><radialGradient id="pg65450" cx="0.4" cy="0.35" r="0.7"><stop offset="0" stop-color="#f2eef9"/><stop offset="0.6" stop-color="#c9c2e2"/><stop offset="1" stop-color="#9a92c2"/></radialGradient></defs><circle cx="14.0" cy="14.0" r="13.0" fill="url(#pg65450)" stroke="#948cba" stroke-width="1.5"/><path d="M6 11.5h9M6 16.5h9" stroke="#45455a" stroke-width="2.2"/><path d="M14 8l7 6-7 6z" fill="#45455a"/></svg>
<div class="t" style="left:691px;top:34px;font-family:'Liberation Sans',sans-serif;font-size:24px;color:#3d3d3d;letter-spacing:-0.677px;-webkit-text-stroke:0.45px #3d3d3d;">main</div>
<svg style="position:absolute;left:780px;top:50px;" width="28" height="28" viewBox="0 0 28 28"><defs><radialGradient id="pg78050" cx="0.4" cy="0.35" r="0.7"><stop offset="0" stop-color="#f2eef9"/><stop offset="0.6" stop-color="#c9c2e2"/><stop offset="1" stop-color="#9a92c2"/></radialGradient></defs><circle cx="14.0" cy="14.0" r="13.0" fill="url(#pg78050)" stroke="#948cba" stroke-width="1.5"/><path d="M8.5 8h11M14 8v13" stroke="#45455a" stroke-width="2"/></svg>
<div class="t" style="left:817px;top:34px;font-family:'Liberation Sans',sans-serif;font-size:24px;color:#111;letter-spacing:-0.090px;-webkit-text-stroke:0.45px #111;">reduce_Circle</div>
<svg style="position:absolute;left:1000px;top:46px;" width="58" height="34" viewBox="0 0 58 34"><circle cx="16" cy="18" r="13" fill="#a9d4f3" stroke="#8cc0e8" stroke-width="1.5"/><path d="M20 13.5h-7v9h7" fill="none" stroke="#333" stroke-width="2.2"/><path d="M22 2v14l9-7z" fill="#2aa33a"/><path d="M40.5 18v-4a4 4 0 0 1 8 0" fill="none" stroke="#5cc25c" stroke-width="2.5"/><rect x="42" y="16" width="14" height="12" rx="2" fill="#5cc25c"/><path d="M46 20h6M49 20v6" stroke="#fff" stroke-width="1.8"/></svg>
<div class="t" style="left:1071px;top:34px;font-family:'Liberation Sans',sans-serif;font-size:24px;color:#3d3d3d;letter-spacing:-1.275px;-webkit-text-stroke:0.45px #3d3d3d;">Canvas</div>
<div style="position:absolute;left:681px;top:757px;width:1291px;height:2px;background:#c3c3c3;"></div>
<svg style="position:absolute;left:645px;top:769px;" width="26" height="26" viewBox="0 0 26 26"><path d="M13 1v24M1 13h24" stroke="#2e9f3a" stroke-width="4"/></svg>
<div style="position:absolute;left:682px;top:759px;width:149px;height:46px;background:linear-gradient(#e9e9e9,#f6f6f6);border:1px solid #a9a9a9;border-top:none;border-radius:0 0 7px 7px;box-sizing:border-box;box-shadow:0 1px 0 #d8d8d8;"></div>
<div style="position:absolute;left:1316px;top:759px;width:142px;height:46px;background:linear-gradient(#e9e9e9,#f6f6f6);border:1px solid #a9a9a9;border-top:none;border-radius:0 0 7px 7px;box-sizing:border-box;box-shadow:0 1px 0 #d8d8d8;"></div>
<div style="position:absolute;left:831px;top:759px;width:240px;height:46px;background:linear-gradient(#e9e9e9,#f6f6f6);border:1px solid #a9a9a9;border-top:none;border-radius:0 0 7px 7px;box-sizing:border-box;box-shadow:0 1px 0 #d8d8d8;"></div>
<div style="position:absolute;left:1070px;top:757px;width:246px;height:51px;background:#fff;border:1px solid #b3b3b3;border-top:none;border-radius:0 0 8px 8px;box-sizing:border-box;"></div>
<svg style="position:absolute;left:700px;top:768px;" width="28" height="28" viewBox="0 0 28 28"><circle cx="14" cy="14" r="13" fill="#8fe08f" stroke="#6cc96c" stroke-width="1.5"/><text x="14" y="20.5" font-size="16" font-family="Liberation Sans" text-anchor="middle" fill="#444">S</text></svg>
<div class="t" style="left:741px;top:753px;font-family:'Liberation Sans',sans-serif;font-size:26px;color:#3d3d3d;letter-spacing:0.709px;-webkit-text-stroke:0.45px #3d3d3d;">Circle</div>
<svg style="position:absolute;left:850px;top:768px;" width="28" height="28" viewBox="0 0 28 28"><circle cx="14" cy="14" r="13" fill="#f4dc84" stroke="#d9b84a" stroke-width="1.5"/><text x="14" y="20.5" font-size="16" font-family="Liberation Sans" text-anchor="middle" fill="#555">E</text></svg>
<div class="t" style="left:891px;top:753px;font-family:'Liberation Sans',sans-serif;font-size:26px;color:#3d3d3d;letter-spacing:0.848px;-webkit-text-stroke:0.45px #3d3d3d;">Circle_Editor</div>
<svg style="position:absolute;left:1088px;top:768px;" width="28" height="28" viewBox="0 0 28 28"><defs><radialGradient id="pg1088768" cx="0.4" cy="0.35" r="0.7"><stop offset="0" stop-color="#f2eef9"/><stop offset="0.6" stop-color="#c9c2e2"/><stop offset="1" stop-color="#9a92c2"/></radialGradient></defs><circle cx="14.0" cy="14.0" r="13.0" fill="url(#pg1088768)" stroke="#948cba" stroke-width="1.5"/><path d="M8.5 8h11M14 8v13" stroke="#45455a" stroke-width="2"/></svg>
<div class="t" style="left:1129px;top:753px;font-family:'Liberation Sans',sans-serif;font-size:26px;color:#111;letter-spacing:0.633px;-webkit-text-stroke:0.45px #111;">reduce_Circle</div>
<svg style="position:absolute;left:1336px;top:768px;" width="28" height="28" viewBox="0 0 28 28"><defs><radialGradient id="pg1336768" cx="0.4" cy="0.35" r="0.7"><stop offset="0" stop-color="#f2eef9"/><stop offset="0.6" stop-color="#c9c2e2"/><stop offset="1" stop-color="#9a92c2"/></radialGradient></defs><circle cx="14.0" cy="14.0" r="13.0" fill="url(#pg1336768)" stroke="#948cba" stroke-width="1.5"/><path d="M6 11.5h9M6 16.5h9" stroke="#45455a" stroke-width="2.2"/><path d="M14 8l7 6-7 6z" fill="#45455a"/></svg>
<div class="t" style="left:1377px;top:753px;font-family:'Liberation Sans',sans-serif;font-size:26px;color:#3d3d3d;letter-spacing:1.214px;-webkit-text-stroke:0.45px #3d3d3d;">main</div>
<div class="t" style="left:11px;top:805px;font-family:'Liberation Sans',sans-serif;font-size:22px;color:#222;letter-spacing:1.188px;-webkit-text-stroke:0.45px #222;">Inspector</div>
<svg style="position:absolute;left:1878px;top:818px;" width="40" height="32" viewBox="0 0 40 32"><g transform="translate(14,16)" fill="#555"><circle r="8"/><rect x="-2.5" y="-12" width="5" height="24"/><rect x="-2.5" y="-12" width="5" height="24" transform="rotate(45)"/><rect x="-2.5" y="-12" width="5" height="24" transform="rotate(90)"/><rect x="-2.5" y="-12" width="5" height="24" transform="rotate(135)"/></g><circle cx="14" cy="16" r="3.5" fill="#cad2e3"/><path d="M30 14h9l-4.5 5z" fill="#555"/></svg>
<svg style="position:absolute;left:1934px;top:821px;" width="28" height="32" viewBox="0 0 28 32"><path d="M12 1v16" stroke="#606060" stroke-width="2.2"/><path d="M7 12l5 6 5-6z" fill="#606060"/><rect x="3" y="23" width="23" height="5" fill="#606060"/><rect x="14" y="24.3" width="10" height="2.4" fill="#fff"/></svg>
<div class="t" style="left:9px;top:845px;font-family:'Liberation Sans',sans-serif;font-size:26px;color:#111;letter-spacing:1.002px;-webkit-text-stroke:0.45px #111;">jetbrains.mps.lang.generator.structure.ReferenceMacro</div>
<div class="t" style="left:1632px;top:843px;font-family:'Liberation Sans',sans-serif;font-size:26px;color:#1c1cf5;letter-spacing:0.982px;-webkit-text-stroke:0.45px #1c1cf5;">Open Concept Declaration</div>
<div style="position:absolute;left:1632px;top:885px;width:330px;height:2px;background:#1c1cf5;"></div>
<div style="position:absolute;left:84px;top:912px;width:256px;height:34px;background:#c0c0c0;"></div>
<div class="t" style="left:84px;top:901px;font-family:'Liberation Mono',monospace;font-size:28px;color:#000080;font-weight:700;letter-spacing:-0.803px;">reference target</div>
<div class="t" style="left:84px;top:969px;font-family:'Liberation Mono',monospace;font-size:28px;color:#000;font-weight:700;letter-spacing:-0.803px;">comment :</div>
<div class="t" style="left:244px;top:969px;font-family:'Liberation Mono',monospace;font-size:28px;color:#808080;letter-spacing:-0.803px;">&lt;none&gt;</div>
<div class="t" style="left:84px;top:1003px;font-family:'Liberation Mono',monospace;font-size:28px;color:#000;font-weight:700;letter-spacing:-0.803px;">referent :</div>
<div class="t" style="left:252px;top:1003px;font-family:'Liberation Mono',monospace;font-size:28px;color:#000080;letter-spacing:-0.803px;">(outputNode, genContext, operationContext, node)-&gt;join(node&lt;StaticFieldDeclaration&gt; | string) {</div>
<div style="position:absolute;left:284px;top:1048px;width:240px;height:34px;background:#e4e4ff;"></div>
<div class="t" style="left:284px;top:1037px;font-family:'Liberation Mono',monospace;font-size:28px;color:#808080;font-style:italic;letter-spacing:-0.803px;">&lt;no statements&gt;</div>
<svg style="position:absolute;left:278px;top:1076px;" width="248" height="6" viewBox="0 0 248 6"><polyline points="0,5 4,1 8,5 12,1 16,5 20,1 24,5 28,1 32,5 36,1 40,5 44,1 48,5 52,1 56,5 60,1 64,5 68,1 72,5 76,1 80,5 84,1 88,5 92,1 96,5 100,1 104,5 108,1 112,5 116,1 120,5 124,1 128,5 132,1 136,5 140,1 144,5 148,1 152,5 156,1 160,5 164,1 168,5 172,1 176,5 180,1 184,5 188,1 192,5 196,1 200,5 204,1 208,5 212,1 216,5 220,1 224,5 228,1 232,5 236,1 240,5 244,1 248,5 252,1" fill="none" stroke="#ff0000" stroke-width="1.7"/></svg>
<div class="t" style="left:252px;top:1071px;font-family:'Liberation Mono',monospace;font-size:28px;color:#000080;letter-spacing:-0.803px;">}</div>
<svg style="position:absolute;left:68px;top:1046px;" width="24" height="34" viewBox="0 0 24 34"><circle cx="12" cy="11" r="10" fill="#f5b94a" stroke="#e0a030" stroke-width="1"/><path d="M7 13l5 4 5-4M12 17v4" stroke="#fff3c4" stroke-width="1.5" fill="none"/><rect x="6" y="20" width="12" height="9" fill="#f5b94a"/><path d="M6 23h12M6 26h12" stroke="#888" stroke-width="2"/><path d="M7 29h10l-2 3h-6z" fill="#777"/></svg>
<svg style="position:absolute;left:32px;top:1018px;" width="20" height="24" viewBox="0 0 20 24"><path d="M1.5 1.5h17v13l-8.5 8-8.5-8z" fill="#fafafa" stroke="#cfcfcf" stroke-width="1.5"/><path d="M5 9h10" stroke="#bdbdbd" stroke-width="1.5"/></svg>
<svg style="position:absolute;left:32px;top:1086px;" width="20" height="24" viewBox="0 0 20 24"><path d="M1.5 22.5h17v-13l-8.5-8-8.5 8z" fill="#fafafa" stroke="#cfcfcf" stroke-width="1.5"/><path d="M5 15h10" stroke="#bdbdbd" stroke-width="1.5"/></svg>
<svg style="position:absolute;left:9px;top:1201px;" width="30" height="29" viewBox="0 0 30 29"><rect x="1.5" y="1.5" width="26" height="22" fill="#bdbdbd" stroke="#555" stroke-width="2.5"/><path d="M7 2v22M22 2v22" stroke="#555" stroke-width="2"/><path d="M1 27.5h28" stroke="#555" stroke-width="2"/></svg>
<div class="t" style="left:63px;top:1187px;font-family:'Liberation Sans',sans-serif;font-size:22px;color:#1e1e1e;letter-spacing:0.926px;-webkit-text-stroke:0.45px #1e1e1e;">Error: Return expected</div>
<div class="t" style="left:1424px;top:1187px;font-family:'Liberation Sans',sans-serif;font-size:24px;color:#9a9a9a;letter-spacing:2.312px;-webkit-text-stroke:0.45px #9a9a9a;">n/a</div>
<div class="t" style="left:1497px;top:1187px;font-family:'Liberation Sans',sans-serif;font-size:24px;color:#9a9a9a;letter-spacing:2.312px;-webkit-text-stroke:0.45px #9a9a9a;">n/a</div>
<svg style="position:absolute;left:1563px;top:1206px;" width="22" height="22" viewBox="0 0 22 22"><path d="M4 9V6a4 4 0 0 1 8 0" fill="none" stroke="#777" stroke-width="2.5"/><rect x="6" y="10" width="14" height="11" rx="2" fill="#777"/><path d="M10 14h6M13 14v5" stroke="#fff" stroke-width="1.8"/></svg>
<svg style="position:absolute;left:1606px;top:1199px;" width="36" height="32" viewBox="0 0 36 32"><rect x="2" y="3" width="9" height="26" rx="4" fill="#ddd" stroke="#666" stroke-width="2"/><path d="M5 7v18M8 7v18" stroke="#888" stroke-width="1.5"/><rect x="19" y="1" width="6" height="6" fill="#666"/><path d="M16 7h12l3 16h-18z" fill="#ccc" stroke="#666" stroke-width="2"/><circle cx="22" cy="13" r="2.5" fill="#666"/><path d="M18 23v8M26 23v8" stroke="#666" stroke-width="3"/></svg>
<svg style="position:absolute;left:1660px;top:1200px;" width="32" height="32" viewBox="0 0 32 32"><path d="M16 1l15 15-15 15-15-15z" fill="#d4a8f7" stroke="#b37ee6" stroke-width="1.5"/><path d="M10 10h12M16 10v14" stroke="#3a3a3a" stroke-width="2"/></svg>
<div class="t" style="left:1694px;top:1186px;font-family:'Liberation Sans',sans-serif;font-size:24px;color:#111;letter-spacing:-2.836px;-webkit-text-stroke:0.45px #111;">:ON</div>
<svg style="position:absolute;left:1750px;top:1200px;" width="36" height="32" viewBox="0 0 36 32"><path d="M18 2C9 2 2 7.5 2 14s6.5 11.5 14 12l16 5-4-7c3-2.5 5-6 5-10C33 7.5 27 2 18 2z" fill="none" stroke="#6b6b6b" stroke-width="2"/></svg>
<div class="t" style="left:1810px;top:1186px;font-family:'Liberation Sans',sans-serif;font-size:24px;color:#1e1e1e;letter-spacing:0.111px;-webkit-text-stroke:0.45px #1e1e1e;">358 of 1820M</div>
<svg style="position:absolute;left:0px;top:1232px;" width="10" height="10" viewBox="0 0 10 10"><path d="M0 0A10 10 0 0 0 10 10H0z" fill="#a8a8a8"/></svg>
<svg style="position:absolute;left:1964px;top:1234px;" width="8" height="8" viewBox="0 0 8 8"><path d="M8 0A8 8 0 0 1 0 8H8z" fill="#a8a8a8"/></svg>
</body></html>
